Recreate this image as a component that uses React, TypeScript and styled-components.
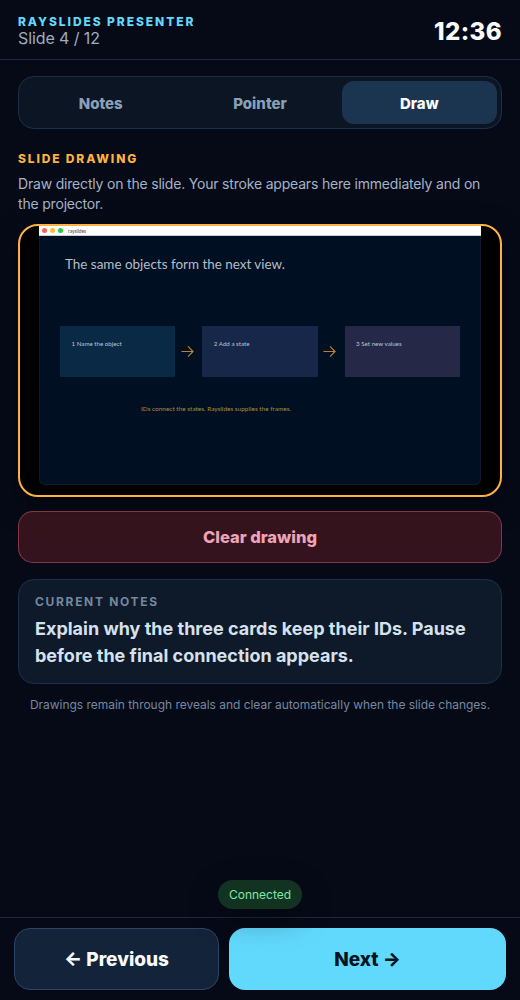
import { createGlobalStyle, styled } from 'styled-components';

const GlobalStyle = createGlobalStyle`
  * {
    box-sizing: border-box;
  }

  html,
  body {
    margin: 0;
    padding: 0;
    background: #060a17;
  }

  body {
    font-family: Inter, 'Liberation Sans', sans-serif;
    -webkit-font-smoothing: antialiased;
  }
`;

const TABS = ['Notes', 'Pointer', 'Draw'];

const STEPS = [
  { label: '1 Name the object', color: '#0a2945' },
  { label: '2 Add a state', color: '#16274a' },
  { label: '3 Set new values', color: '#252847' },
];

function StepArrow() {
  return (
    <ArrowSvg viewBox="0 0 14 14" aria-hidden="true">
      <path d="M0.5 7H13M7.5 1.5L13 7L7.5 12.5" />
    </ArrowSvg>
  );
}

export default function App() {
  return (
    <Shell>
      <GlobalStyle />
      <Header>
        <div>
          <Brand>RAYSLIDES PRESENTER</Brand>
          <SlideCount>Slide 4 / 12</SlideCount>
        </div>
        <Clock>12:36</Clock>
      </Header>

      <Main>
        <TabBar>
          {TABS.map(tab => (
            <Tab key={tab} $active={tab === 'Draw'}>
              {tab}
            </Tab>
          ))}
        </TabBar>

        <SectionLabel>SLIDE DRAWING</SectionLabel>
        <Hint>
          Draw directly on the slide. Your stroke appears here immediately and
          on the projector.
        </Hint>

        <Stage>
          <Slide>
            <WindowBar>
              <Dot $color="#ff5f57" />
              <Dot $color="#febc2e" />
              <Dot $color="#28c840" />
              <WindowTitle>rayslides</WindowTitle>
            </WindowBar>
            <SlideBody>
              <SlideTitle>The same objects form the next view.</SlideTitle>
              <StepRow>
                {STEPS.map((step, index) => (
                  <StepGroup key={step.label}>
                    {index > 0 && <StepArrow />}
                    <StepCard $color={step.color}>{step.label}</StepCard>
                  </StepGroup>
                ))}
              </StepRow>
              <SlideCaption>
                IDs connect the states. Rayslides supplies the frames.
              </SlideCaption>
            </SlideBody>
          </Slide>
        </Stage>

        <ClearButton>Clear drawing</ClearButton>

        <NotesCard>
          <NotesLabel>CURRENT NOTES</NotesLabel>
          <NotesText>
            Explain why the three cards keep their IDs. Pause before the final
            connection appears.
          </NotesText>
        </NotesCard>

        <Footnote>
          Drawings remain through reveals and clear automatically when the slide
          changes.
        </Footnote>
      </Main>

      <Footer>
        <Toast>Connected</Toast>
        <PrevButton>← Previous</PrevButton>
        <NextButton>Next →</NextButton>
      </Footer>
    </Shell>
  );
}

const Shell = styled.div`
  display: flex;
  flex-direction: column;
  width: 520px;
  height: 1000px;
  overflow: hidden;
  background: #060a17;
`;

const Header = styled.header`
  display: flex;
  justify-content: space-between;
  align-items: center;
  height: 60px;
  padding: 4px 18px 0;
  border-bottom: 1px solid #1a2a40;
`;

const Brand = styled.div`
  font-size: 12px;
  font-weight: 800;
  line-height: 13px;
  letter-spacing: 1.92px;
  color: #61d9fd;
`;

const SlideCount = styled.div`
  margin-top: 1px;
  font-size: 16px;
  line-height: 19px;
  letter-spacing: -0.1px;
  color: #9eacbf;
`;

const Clock = styled.div`
  font-size: 24px;
  font-weight: 800;
  letter-spacing: 0.4px;
  color: #f8fafc;
`;

const Main = styled.main`
  flex: 1;
  padding: 16px 18px 0;
`;

const TabBar = styled.div`
  display: grid;
  grid-template-columns: repeat(3, 1fr);
  gap: 4px;
  height: 53px;
  padding: 4px;
  border: 1px solid #1c3049;
  border-radius: 16px;
  background: #0c1523;
`;

const Tab = styled.div<{ $active: boolean }>`
  display: flex;
  align-items: center;
  justify-content: center;
  padding-top: 1px;
  border-radius: 12px;
  font-size: 15px;
  font-weight: 800;
  color: ${({ $active }) => ($active ? '#f8fafc' : '#8aa0b8')};
  background: ${({ $active }) => ($active ? '#1b3550' : 'transparent')};
`;

const SectionLabel = styled.div`
  margin-top: 23px;
  font-size: 12px;
  font-weight: 800;
  line-height: 14px;
  letter-spacing: 1.85px;
  color: #fdb241;
`;

const Hint = styled.p`
  margin: 8px 0 0;
  font-size: 14px;
  line-height: 20px;
  letter-spacing: -0.19px;
  color: #a4b2c6;
`;

const Stage = styled.div`
  display: flex;
  justify-content: center;
  height: 273px;
  margin-top: 10px;
  border: 2px solid #fdb241;
  border-radius: 20px;
  background: #000;
  box-shadow: 0 10px 30px rgba(0, 0, 0, 0.35);
  overflow: hidden;
`;

const Slide = styled.div`
  display: flex;
  flex-direction: column;
  width: 442px;
  height: 259px;
  border-radius: 0 0 6px 6px;
  background: #001022;
  box-shadow: inset 0 0 0 1px #0d1a2b;
  overflow: hidden;
`;

const WindowBar = styled.div`
  display: flex;
  align-items: center;
  gap: 3px;
  flex: none;
  height: 10px;
  padding-left: 3px;
  background: #fff;
  border-bottom: 1px solid #c8ced6;
`;

const Dot = styled.span<{ $color: string }>`
  width: 5px;
  height: 5px;
  border-radius: 50%;
  background: ${({ $color }) => $color};
`;

const WindowTitle = styled.span`
  margin-left: 2px;
  font-family: Lato, sans-serif;
  font-size: 4.8px;
  color: #444;
`;

const SlideBody = styled.div`
  display: flex;
  flex-direction: column;
  flex: 1;
  padding: 18px 21px 0;
`;

const SlideTitle = styled.div`
  margin-left: 5px;
  font-family: Lato, sans-serif;
  font-size: 13.45px;
  line-height: 20px;
  color: #b4bdc9;
`;

const StepRow = styled.div`
  display: flex;
  margin-top: 52px;
`;

const StepGroup = styled.div`
  display: flex;
  align-items: center;
  &:not(:first-child) {
    margin-left: 5.5px;
  }
`;

const StepCard = styled.div<{ $color: string }>`
  width: 115.3px;
  height: 51px;
  padding: 13px 11.5px 0;
  font-family: Lato, sans-serif;
  font-size: 6.2px;
  line-height: 9px;
  white-space: nowrap;
  color: #bcc6d2;
  background: ${({ $color }) => $color};
`;

const ArrowSvg = styled.svg`
  width: 13px;
  height: 13px;
  margin-right: 8.5px;
  fill: none;
  stroke: #b9843a;
  stroke-width: 1.2;
`;

const SlideCaption = styled.div`
  margin-top: 27px;
  margin-left: 81px;
  font-family: Lato, sans-serif;
  font-size: 6.45px;
  line-height: 9px;
  color: #b08a3a;
`;

const ClearButton = styled.button`
  display: block;
  width: 100%;
  height: 52px;
  margin-top: 14px;
  border: 1px solid rgba(251, 113, 133, 0.4);
  border-radius: 15px;
  background: rgba(163, 43, 47, 0.3);
  font-family: inherit;
  font-size: 16.5px;
  font-weight: 800;
  color: #eda4b6;
`;

const NotesCard = styled.section`
  height: 105px;
  margin-top: 16px;
  padding: 15px 16px 0;
  border: 1px solid #1c3049;
  border-radius: 16px;
  background: #0e1929;
`;

const NotesLabel = styled.div`
  font-size: 12px;
  font-weight: 700;
  line-height: 13px;
  letter-spacing: 1.68px;
  color: #74879e;
`;

const NotesText = styled.p`
  margin: 7px 0 0;
  font-size: 18px;
  font-weight: 650;
  line-height: 27px;
  color: #d5e1ee;
`;

const Footnote = styled.p`
  margin: 13px 0 0;
  font-size: 12px;
  line-height: 16px;
  letter-spacing: -0.03px;
  text-align: center;
  white-space: nowrap;
  color: #75889f;
`;

const Footer = styled.footer`
  position: relative;
  display: flex;
  gap: 10px;
  flex: none;
  height: 83px;
  padding: 10px 14px 0;
  border-top: 1px solid #1a2a40;
`;

const Toast = styled.div`
  position: absolute;
  top: -38px;
  left: 218px;
  z-index: 2;
  width: 84px;
  height: 29px;
  border-radius: 15px;
  background: #123322;
  box-shadow: 0 10px 30px rgba(0, 0, 0, 0.35);
  font-size: 12px;
  line-height: 29px;
  text-align: center;
  color: #7de6a4;
`;

const PrevButton = styled.button`
  width: 205px;
  height: 62px;
  padding-top: 2px;
  border: 1px solid #2a4565;
  border-radius: 16px;
  background: #13233a;
  font-family: inherit;
  font-size: 19px;
  font-weight: 800;
  color: #f8fafc;
`;

const NextButton = styled.button`
  width: 277px;
  height: 62px;
  padding-top: 2px;
  border: 0;
  border-radius: 16px;
  background: #61d9fd;
  font-family: inherit;
  font-size: 19px;
  font-weight: 800;
  color: #061220;
`;
